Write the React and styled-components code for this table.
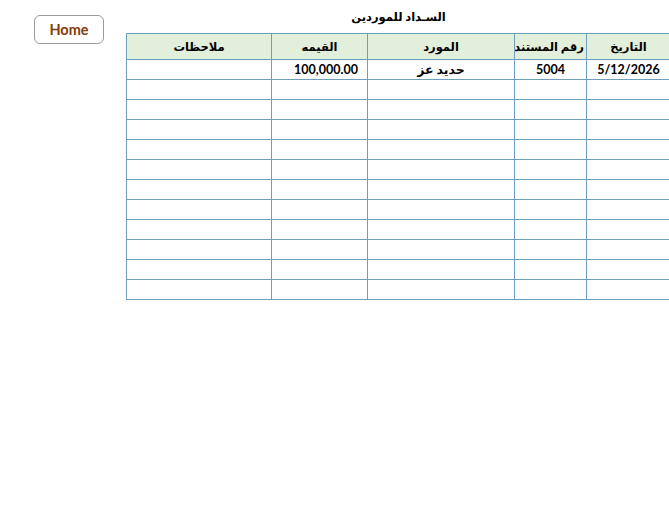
import React from "react";
import styled, { createGlobalStyle } from "styled-components";

const GlobalStyle = createGlobalStyle`
  html, body {
    margin: 0;
    padding: 0;
    background: #ffffff;
    overflow: hidden;
  }
`;

const columns = [
  { key: "date", label: "التاريخ", width: 84 },
  { key: "doc", label: "رقم المستند", width: 72 },
  { key: "supplier", label: "المورد", width: 147 },
  { key: "amount", label: "القيمه", width: 96, align: "end" },
  { key: "notes", label: "ملاحظات", width: 145 },
];

const rows = [
  { date: "5/12/2026", doc: "5004", supplier: "حديد عز", amount: "100,000.00", notes: "" },
  ...Array.from({ length: 11 }, () => ({})),
];

export default function App() {
  return (
    <>
      <GlobalStyle />
      <Page>
        <HomeButton>Home</HomeButton>
        <Sheet>
          <Title dir="rtl">السـداد للموردين</Title>
          <Table dir="rtl">
            <colgroup>
              {columns.map((c) => (
                <col key={c.key} style={{ width: c.width }} />
              ))}
            </colgroup>
            <thead>
              <tr>
                {columns.map((c) => (
                  <HeadCell key={c.key}>{c.label}</HeadCell>
                ))}
              </tr>
            </thead>
            <tbody>
              {rows.map((row, i) => (
                <tr key={i}>
                  {columns.map((c) => (
                    <Cell key={c.key} $align={c.align}>
                      {row[c.key] || ""}
                    </Cell>
                  ))}
                </tr>
              ))}
            </tbody>
          </Table>
        </Sheet>
      </Page>
    </>
  );
}

const Page = styled.div`
  display: flex;
  align-items: flex-start;
  gap: 22px;
  padding-left: 34px;
  width: 700px;
  font-family: "Lato", "DejaVu Sans", sans-serif;
  color: #000;
`;

const HomeButton = styled.button`
  margin-top: 15px;
  width: 70px;
  height: 29px;
  background: #ffffff;
  border: 1px solid #9a9a9a;
  border-radius: 6px;
  color: #843c0c;
  font-family: "Lato", "DejaVu Sans", sans-serif;
  font-weight: 700;
  font-size: 14.5px;
  padding: 0;
  cursor: pointer;
`;

const Sheet = styled.div`
  display: flex;
  flex-direction: column;
  width: 545px;
`;

const Title = styled.div`
  height: 33px;
  line-height: 33px;
  text-align: center;
  font-size: 11.5px;
  font-weight: 700;
`;

const Table = styled.table`
  border-collapse: collapse;
  table-layout: fixed;
  width: 545px;
`;

const HeadCell = styled.th`
  height: 25px;
  padding: 0 2px;
  background: #e2efda;
  border: 1px solid #6d9ebd;
  font-size: 11.5px;
  font-weight: 700;
  text-align: center;
  white-space: nowrap;
  overflow: hidden;
`;

const Cell = styled.td`
  height: 19px;
  padding: 0 ${(p) => (p.$align === "end" ? "9px" : "4px")};
  border: 1px solid #6d9ebd;
  font-size: 12.5px;
  font-weight: 700;
  line-height: 19px;
  white-space: nowrap;
  text-align: ${(p) => (p.$align === "end" ? "right" : "center")};
`;
